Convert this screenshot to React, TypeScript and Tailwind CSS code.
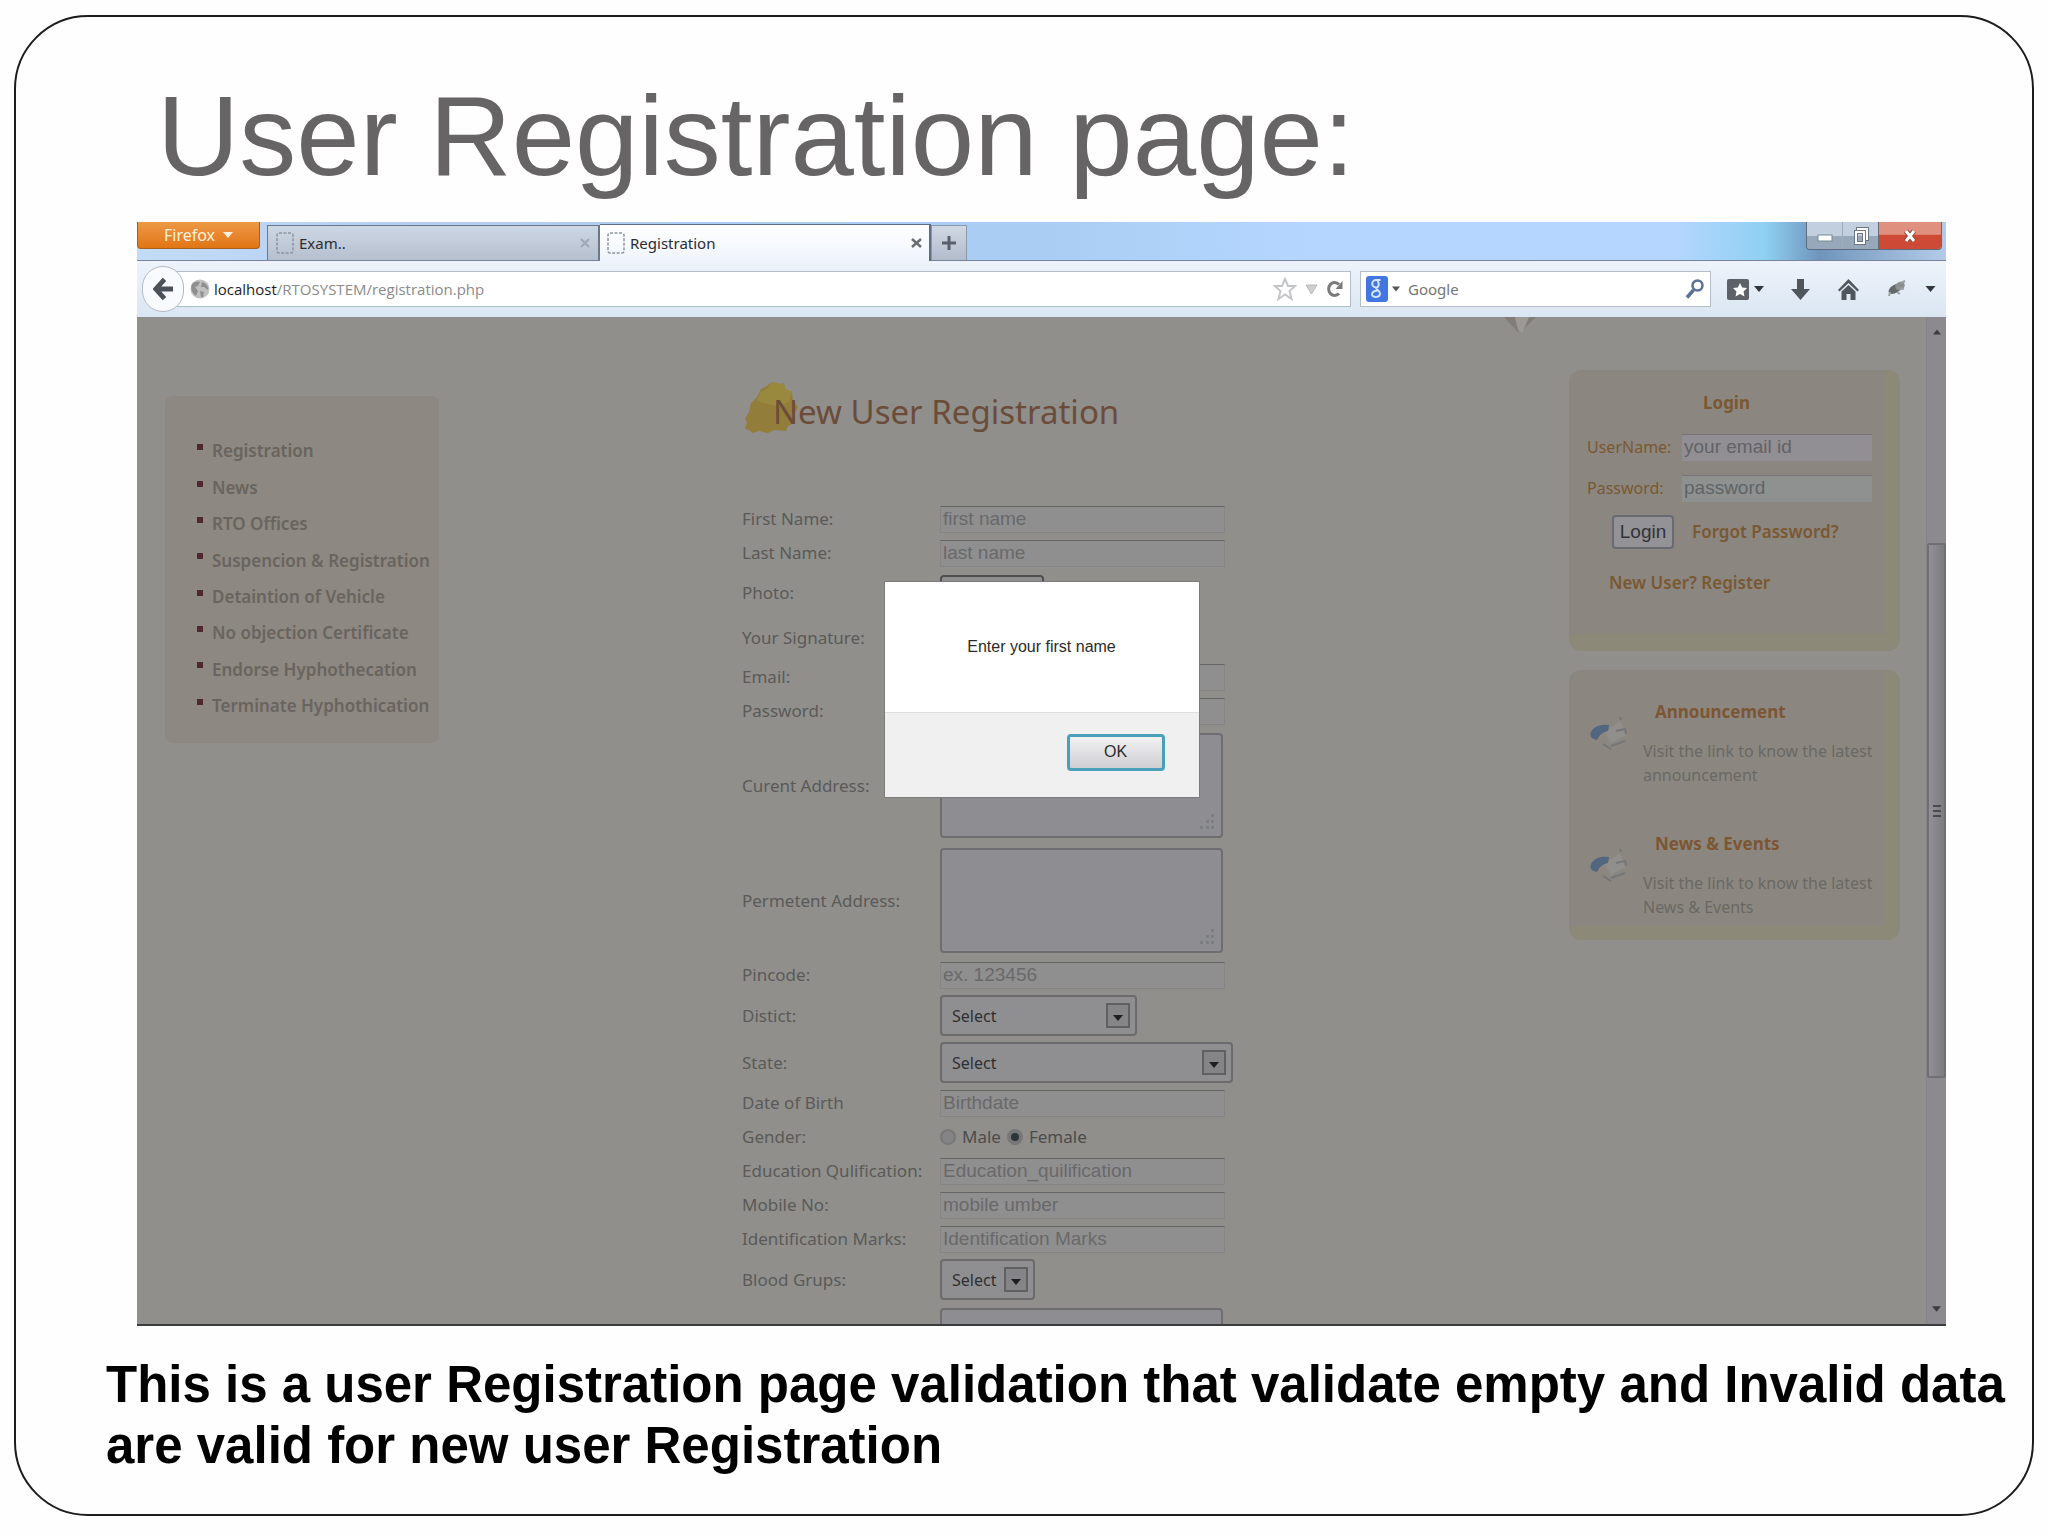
import { useState } from "react";
import type { ReactNode } from "react";

const menuItems = [
  "Registration",
  "News",
  "RTO Offices",
  "Suspencion & Registration",
  "Detaintion of Vehicle",
  "No objection Certificate",
  "Endorse Hyphothecation",
  "Terminate Hyphothication",
];

const BlankPageIcon = () => (
  <svg width="18" height="22" viewBox="0 0 18 22" fill="none" className="shrink-0">
    <rect x="1" y="1" width="16" height="20" rx="2" stroke="#8e95a0" strokeWidth="1.5" strokeDasharray="3 1.5" />
  </svg>
);

const Caret = ({ className }: { className: string }) => (
  <svg width="10" height="6" viewBox="0 0 10 6" className={className}>
    <path d="M0 0h10L5 6z" fill="currentColor" />
  </svg>
);

const TabStrip = () => (
  <div className="flex h-[39px] items-end border-b border-[#76839b] bg-[linear-gradient(90deg,#c3dcf5_0%,#b5cdf5_15%,#a9cdf3_50%,#b5d7ff_65%,#b5d7ff_85%,#8fd0f2_90%,#6f95bb_93%,#b4cbe8_100%)]">
    <button className="mr-[7px] flex h-[27px] w-[123px] items-center justify-center gap-2 self-start rounded-b border border-t-0 border-[#a8611c] bg-linear-to-b from-[#ee9a44] to-[#e07412] font-['Noto_Sans'] text-[16px] text-[#fdf0dc]">
      Firefox
      <Caret className="text-[#fdf0dc]" />
    </button>
    <div className="flex h-[35px] w-[333px] items-center gap-[5px] border-t border-r-2 border-l border-[#6d7789] bg-linear-to-b from-[#cdd7e4] to-[#b6bfcf] px-2 font-['Noto_Sans'] text-[15px] text-[#2b2d33]">
      <BlankPageIcon />
      <span className="flex-1">Exam..</span>
      <button aria-label="Close Exam" className="text-[#9fa8b5]">
        <svg width="10" height="10" viewBox="0 0 10 10" stroke="currentColor" strokeWidth="2">
          <path d="M1 1l8 8M9 1l-8 8" />
        </svg>
      </button>
    </div>
    <div className="-mb-px flex h-[37px] w-[331px] items-center gap-[5px] border-t border-r-2 border-[#5f6c8c] bg-linear-to-b from-white to-[#eff4fc] px-[7px] font-['Noto_Sans'] text-[15px] text-[#2b2d33]">
      <BlankPageIcon />
      <span className="flex-1">Registration</span>
      <button aria-label="Close Registration" className="text-[#6a6e75]">
        <svg width="11" height="10" viewBox="0 0 11 10" stroke="currentColor" strokeWidth="2.5">
          <path d="M1 1l9 8M10 1L1 9" />
        </svg>
      </button>
    </div>
    <button aria-label="New tab" className="flex h-[35px] w-[36px] items-center justify-center border border-b-0 border-[#8d98aa] bg-linear-to-b from-[#d0d8e4] to-[#b3bccb] text-[#5a606a]">
      <svg width="14" height="14" viewBox="0 0 14 14" stroke="currentColor" strokeWidth="3">
        <path d="M7 0v14M0 7h14" />
      </svg>
    </button>
    <div className="mr-1 ml-auto flex h-[28px] self-start overflow-hidden rounded-b border border-t-0 border-[#5d6b7d]">
      <button aria-label="Minimize" className="flex w-[36px] items-end justify-center border-r border-[#9fadbd] bg-linear-to-b from-[#c2cfde] from-50% to-[#98a8bb] to-50% pb-[6px]">
        <svg width="16" height="9" viewBox="0 0 16 9">
          <rect x="1" y="1" width="14" height="6" fill="#fff" stroke="#7b8796" />
        </svg>
      </button>
      <button aria-label="Restore" className="flex w-[36px] items-center justify-center border-r border-[#5d6b7d] bg-linear-to-b from-[#c2cfde] from-50% to-[#98a8bb] to-50%">
        <svg width="16" height="18" viewBox="0 0 16 18" fill="none">
          <path d="M5 5V2h9v10h-3" stroke="#6c7785" strokeWidth="4" />
          <path d="M5 5V2h9v10h-3" stroke="#fff" strokeWidth="2" />
          <rect x="3" y="5" width="8" height="11" stroke="#6c7785" strokeWidth="4" />
          <rect x="3" y="5" width="8" height="11" stroke="#fff" strokeWidth="2" />
        </svg>
      </button>
      <button aria-label="Close" className="flex w-[62px] items-center justify-center bg-linear-to-b from-[#e0907f] from-45% to-[#cc4a36] to-50%">
        <svg width="16" height="14" viewBox="0 0 16 14">
          <path d="M4 2l8 10M12 2L4 12" stroke="#8f4237" strokeWidth="5" />
          <path d="M4 2l8 10M12 2L4 12" stroke="#fff" strokeWidth="3" />
        </svg>
      </button>
    </div>
  </div>
);

const NavBar = () => (
  <div className="flex h-14 items-center bg-linear-to-b from-[#eef3fb] to-[#dae6f2] text-[#51555c]">
    <button aria-label="Back" className="relative z-10 -mr-[8px] ml-[5px] flex h-[46px] w-[42px] shrink-0 items-center justify-center rounded-full border border-[#b3bac4] bg-[#f8fafd]">
      <svg width="21" height="24" viewBox="0 0 22 24" fill="none" stroke="#4b5159" strokeWidth="5">
        <path d="M12 2L3 12l9 10M3 12h18" />
      </svg>
    </button>
    <div className="flex h-[36px] flex-1 items-center border border-[#b4bdc9] border-b-[#a8bfc6] bg-white pr-[6px] pl-[13px] font-['Open_Sans'] text-[15px]">
      <svg width="20" height="20" viewBox="0 0 20 20" className="mr-1 shrink-0">
        <circle cx="10" cy="10" r="9.5" fill="#c0c0c0" />
        <path d="M2 5c3-3 7-3 8-2l-2 4-3 1 3 4-2 5C2 14 0 9 2 5zM12 3c4 1 7 5 6 8l-4-3-3 0zM10 12l4 1-1 5-2 0z" fill="#8f8f8f" />
      </svg>
      <label htmlFor="address" className="font-medium text-[#1e1e1e]">localhost</label>
      <input id="address" defaultValue="/RTOSYSTEM/registration.php" className="min-w-0 flex-1 text-[#8b8b8b] outline-none" />
      <svg width="24" height="24" viewBox="0 0 24 24" className="mr-2" fill="none" stroke="#c3c5c8" strokeWidth="2">
        <path d="M12 2l3 7h7l-5.500 5 2 8L12 17.500 5.500 22l2-8L2 9h7z" />
      </svg>
      <svg width="13" height="11" viewBox="0 0 13 11" className="mr-[9px]">
        <path d="M1 1h11L6.500 10z" fill="#cfcfcf" stroke="#b9b9b9" />
      </svg>
      <svg width="17" height="18" viewBox="0 0 17 18" fill="none">
        <path d="M12 13.500A6 6.500 0 1 1 12 4.500" stroke="#7a7a7a" strokeWidth="3" />
        <path d="M15.500 1v8h-7z" fill="#7a7a7a" />
      </svg>
    </div>
    <form className="mr-4 ml-[9px] flex h-[36px] w-[351px] items-center border border-[#b4bdc9] bg-white px-[5px]">
      <svg width="22" height="26" viewBox="0 0 22 26" className="shrink-0">
        <rect width="22" height="26" rx="3" fill="#4277e0" />
        <path d="M14.500 4H10a3.500 3.500 0 1 0 0 7.500c3 0 3.500-4 1.500-7M10 11.500c-1 2 4 2.500 4 6 0 4.500-8 4.500-8 1s4-4 5.500-3.500" fill="none" stroke="#d5e3fb" strokeWidth="2" />
      </svg>
      <Caret className="mr-2 ml-1 w-2 shrink-0" />
      <input aria-label="Search" placeholder="Google" className="w-full font-['Noto_Sans'] text-[15px] outline-none placeholder:text-[#757575]" />
      <button type="button" aria-label="Go" className="text-[#5c7097]">
        <svg width="20" height="20" viewBox="0 0 20 20" fill="none" stroke="currentColor">
          <circle cx="12.500" cy="6.500" r="5" strokeWidth="2.500" />
          <path d="M8.500 11L2 18.500" strokeWidth="3.500" />
        </svg>
      </button>
    </form>
    <button aria-label="Bookmarks" className="mr-[27px] flex items-center gap-[5px]">
      <svg width="22" height="21" viewBox="0 0 22 21">
        <rect width="22" height="21" rx="2" fill="#5d6168" />
        <path d="M13 4l2.200 4.500 4.800.500-3.500 3.500 1 5-4.500-2.500-4.500 2.500 1-5L6 9l4.800-.500z" fill="#fff" />
      </svg>
      <Caret className="text-[#33363b]" />
    </button>
    <button aria-label="Downloads" className="mr-[28px]">
      <svg width="19" height="21" viewBox="0 0 19 21" fill="currentColor">
        <path d="M6 0h7v10h6l-9.500 11L0 10h6z" />
      </svg>
    </button>
    <button aria-label="Home" className="mr-[28px]">
      <svg width="21" height="21" viewBox="0 0 21 21" fill="currentColor">
        <path d="M10.500 0L21 11l-1.500 1.500L10.500 4l-9 8.500L0 11z" />
        <path d="M10.500 6l7 6.500V21h-5v-6h-4v6h-5v-8.500z" />
      </svg>
    </button>
    <button aria-label="Firebug" className="mr-[18px]">
      <svg width="20" height="18" viewBox="0 0 20 18">
        <ellipse cx="8" cy="9" rx="7" ry="4" fill="#65686a" transform="rotate(-30 8 9)" />
        <ellipse cx="13" cy="6" rx="5" ry="4" fill="#8b8f90" transform="rotate(-30 13 6)" />
        <path d="M14 3l4-2M13 8l4 1M10 12l3 2M3 12l-1 4" stroke="#9da1a1" strokeWidth="2" />
      </svg>
    </button>
    <Caret className="mr-[10px] w-[11px] text-[#33363b]" />
  </div>
);

const Sidebar = () => (
  <nav className="mt-[79px] ml-[28px] h-[347px] w-[274px] shrink-0 rounded-lg bg-[#8d8881] pt-[37px] pl-8">
    <ul className="grid h-[291px] auto-rows-fr">
      {menuItems.map((item) => (
        <li key={item} className="flex items-center gap-[9px]">
          <span className="mb-2 size-[6px] bg-[#4e2830]" />
          <a href="#" className="font-['Noto_Sans'] text-[17px] font-semibold whitespace-nowrap text-[#69645f]">
            {item}
          </a>
        </li>
      ))}
    </ul>
  </nav>
);

interface RowProps {
  label: string;
  id: string;
  className?: string;
  children: ReactNode;
}

const Row = ({ label, id, className = "h-[34px]", children }: RowProps) => (
  <div className={"flex shrink-0 items-center " + className}>
    <label htmlFor={id} className="w-[198px] shrink-0 font-['Noto_Sans'] text-[17px] text-[#5a5a58]">
      {label}
    </label>
    {children}
  </div>
);

const TextBox = ({ id, placeholder = "", type = "text" }: { id: string; placeholder?: string; type?: string }) => (
  <input
    id={id}
    type={type}
    placeholder={placeholder}
    className="h-[27px] w-[285px] border border-[#858588] border-t-[#646466] bg-[#8f8f90] px-[2px] font-['Liberation_Sans'] text-[19px] outline-none placeholder:text-[#69696a]"
  />
);

const AddressBox = ({ id }: { id: string }) => (
  <div className="relative">
    <textarea id={id} className="block h-[105px] w-[283px] resize-none rounded border-2 border-[#6e6e70] bg-[#8e8e92] outline-none" />
    <svg width="16" height="16" viewBox="0 0 16 16" className="absolute right-2 bottom-2" fill="#7b7f81">
      <path d="M12 0h3v3h-3zM7 6h3v3H7zM12 6h3v3h-3zM1 12h3v3H1zM7 12h3v3H7zM12 12h3v3h-3z" />
    </svg>
  </div>
);

const SelectBox = ({ id, className }: { id: string; className: string }) => (
  <div className={"relative h-[41px] " + className}>
    <select id={id} className="h-full w-full appearance-none rounded border-2 border-[#6b6b6d] bg-[#8f8f91] pl-[10px] font-['Noto_Sans'] text-[16px] text-[#303032] outline-none">
      <option>Select</option>
    </select>
    <span className="pointer-events-none absolute top-[8px] right-[7px] flex h-[25px] w-[24px] items-center justify-center border-2 border-[#606062] bg-[#858588] text-[#1f1f21]">
      <Caret className="mt-1" />
    </span>
  </div>
);

const RegistrationForm = () => {
  const [gender, setGender] = useState("female");

  return (
    <main className="flex w-[524px] shrink-0 flex-col">
      <h2 className="relative mt-[71px] mb-[66px] h-12 pl-[31px] font-['Noto_Sans'] text-[33px] leading-[48px] text-[#6b4c38]">
        <svg width="56" height="54" viewBox="0 0 56 54" className="absolute -top-[8px] left-[2px]">
          <path d="M28 2l8 2 4-1 1 6 7 3 1 9 5 6-4 7 1 9-7 3-2 5-12-1-6 3-9-2-6 2-4-3-4-1 2-7-2-3 4-7 2-9 6-6 4-8 6-3z" fill="#937d3a" />
          <path d="M28 2l8 2 4-1 1 6 7 3-3 10-10 4-16-3-6-3 4-8 6-3z" fill="#99893f" />
        </svg>
        <span className="relative">New User Registration</span>
      </h2>
      <form className="flex flex-col">
        <Row label="First Name:" id="first"><TextBox id="first" placeholder="first name" /></Row>
        <Row label="Last Name:" id="last"><TextBox id="last" placeholder="last name" /></Row>
        <Row label="Photo:" id="photo" className="h-[45px]">
          <button id="photo" type="button" className="h-9 w-[104px] rounded border-2 border-[#4e4e50] bg-[#8f8f8f]" />
        </Row>
        <Row label="Your Signature:" id="signature" className="h-[45px]">
          <button id="signature" type="button" className="h-9 w-[104px] rounded border-2 border-[#4e4e50] bg-[#8f8f8f]" />
        </Row>
        <Row label="Email:" id="email"><TextBox id="email" /></Row>
        <Row label="Password:" id="password"><TextBox id="password" type="password" /></Row>
        <Row label="Curent Address:" id="current" className="h-[115px]"><AddressBox id="current" /></Row>
        <Row label="Permetent Address:" id="permanent" className="h-[115px]"><AddressBox id="permanent" /></Row>
        <Row label="Pincode:" id="pincode"><TextBox id="pincode" placeholder="ex. 123456" /></Row>
        <Row label="Distict:" id="district" className="h-[47px]"><SelectBox id="district" className="w-[197px]" /></Row>
        <Row label="State:" id="state" className="h-[47px]"><SelectBox id="state" className="w-[293px]" /></Row>
        <Row label="Date of Birth" id="birth"><TextBox id="birth" placeholder="Birthdate" /></Row>
        <Row label="Gender:" id="male">
          <div className="flex items-center gap-[6px] font-['Noto_Sans'] text-[17px] text-[#4c4c4b]">
            <input
              id="male"
              type="radio"
              name="gender"
              checked={gender === "male"}
              onChange={() => setGender("male")}
              className="size-4 appearance-none rounded-full border-2 border-[#777778] bg-[#848486] checked:border-4 checked:bg-[#2c3538]"
            />
            <label htmlFor="male">Male</label>
            <input
              id="female"
              type="radio"
              name="gender"
              checked={gender === "female"}
              onChange={() => setGender("female")}
              className="size-4 appearance-none rounded-full border-2 border-[#777778] bg-[#848486] checked:border-4 checked:bg-[#2c3538]"
            />
            <label htmlFor="female">Female</label>
          </div>
        </Row>
        <Row label="Education Qulification:" id="education"><TextBox id="education" placeholder="Education_quilification" /></Row>
        <Row label="Mobile No:" id="mobile"><TextBox id="mobile" placeholder="mobile umber" /></Row>
        <Row label="Identification Marks:" id="marks"><TextBox id="marks" placeholder="Identification Marks" /></Row>
        <Row label="Blood Grups:" id="blood" className="h-[47px]"><SelectBox id="blood" className="w-[95px]" /></Row>
        <Row label="" id="other" className="h-[115px]"><AddressBox id="other" /></Row>
      </form>
    </main>
  );
};

const LoginBox = () => (
  <form className="flex h-[281px] flex-col rounded-xl border-r-[14px] border-b-[16px] border-[#8c8979] bg-[#8b8780] pl-[18px] font-['Noto_Sans'] text-[16px] text-[#7a5832]">
    <h3 className="mt-[21px] ml-[116px] text-[17px] leading-6 font-bold">Login</h3>
    <div className="mt-[15px] flex h-[34px] items-center">
      <label htmlFor="login-user" className="w-[95px] shrink-0">UserName:</label>
      <input id="login-user" placeholder="your email id" className="h-[27px] w-[190px] border-t border-[#747275] bg-[#918f94] px-[2px] font-['Liberation_Sans'] text-[19px] outline-none placeholder:text-[#636266]" />
    </div>
    <div className="mt-[7px] flex h-[34px] items-center">
      <label htmlFor="login-pass" className="w-[95px] shrink-0">Password:</label>
      <input id="login-pass" type="password" placeholder="password" className="h-[27px] w-[190px] border-t border-[#747275] bg-[#8e9190] px-[2px] font-['Liberation_Sans'] text-[19px] outline-none placeholder:text-[#5e6466]" />
    </div>
    <div className="mt-[10px] ml-[25px] flex items-center gap-[18px]">
      <button type="button" className="h-[34px] w-[62px] rounded-sm border-2 border-[#696b72] bg-[#929297] font-['Liberation_Sans'] text-[19px] text-[#333338]">
        Login
      </button>
      <a href="#" className="text-[17px] font-semibold">Forgot Password?</a>
    </div>
    <a href="#" className="mt-[21px] ml-[22px] text-[17px] font-semibold">New User? Register</a>
  </form>
);

const MegaphoneIcon = () => (
  <svg width="42" height="42" viewBox="0 0 42 42" className="mt-[13px] -ml-[2px] shrink-0" fill="none">
    <path d="M16 19L31 8l6 14-15 8z" fill="#918f8c" />
    <path d="M2 19c3-6 10-8 18-7l-1 6c-5 1-8 3-11 9-5-1-8-4-6-8z" fill="#526680" />
    <path d="M31 4l1 3M27 18l9-2M36 15l1 6M14 31l8 5M22 33l14-5" stroke="#757678" strokeWidth="2" />
  </svg>
);

const NewsItem = ({ title, text }: { title: string; text: string }) => (
  <article className="flex h-[132px] gap-[12px]">
    <MegaphoneIcon />
    <div className="font-['Noto_Sans']">
      <h3 className="ml-3 text-[17px] leading-6 font-bold text-[#7c5632]">{title}</h3>
      <p className="mt-[15px] w-[240px] text-[16px] leading-6 text-[#6a6864]">{text}</p>
    </div>
  </article>
);

const ScrollBar = () => (
  <div className="flex w-[20px] shrink-0 flex-col items-center border-l border-[#858388] bg-[#8c8a8f] text-[#3d3d40]">
    <Caret className="mt-3 w-[8px] rotate-180" />
    <div className="mt-[208px] flex h-[535px] w-[19px] flex-col items-center justify-center gap-[3px] rounded-xs border-2 border-[#706f74] bg-linear-to-r from-[#929196] to-[#7d7b82]">
      <span className="h-[2px] w-2 bg-[#4b4b4f]" />
      <span className="h-[2px] w-2 bg-[#4b4b4f]" />
      <span className="h-[2px] w-2 bg-[#4b4b4f]" />
    </div>
    <Caret className="mt-auto mb-3 w-[9px]" />
  </div>
);

const AlertDialog = () => (
  <div role="dialog" aria-label="Alert" className="absolute top-[265px] left-1/2 w-[314px] -translate-x-1/2 bg-white font-['Liberation_Sans'] text-[16px] text-[#2b2b2b] outline outline-[#7b7b7b]">
    <p className="flex h-[130px] items-center justify-center">Enter your first name</p>
    <div className="flex h-[85px] items-center justify-end border-t border-[#dedede] bg-[#f1f0f1] pr-[34px]">
      <button className="mb-[6px] h-[37px] w-[98px] rounded border-[3px] border-[#4a9fbb] bg-linear-to-b from-[#f2f2f2] to-[#cfcfd4]">OK</button>
    </div>
  </div>
);

export default function App() {
  return (
    <div className="min-h-screen bg-[#fefefe] px-[14px] pt-[15px] pb-[20px]">
      <div className="min-h-[calc(100vh-35px)] rounded-[74px] border-2 border-[#1c1c1c] bg-[#fefefe]">
        <h1 className="mt-[59px] mb-[26px] ml-[141px] font-['Liberation_Sans'] text-[114px] leading-[120px] text-[#666465]">
          User Registration page:
        </h1>

        <section className="mr-[86px] ml-[121px] overflow-hidden border-b-2 border-[#3a3d3d]">
          <TabStrip />
          <NavBar />
          <div className="relative flex h-[1007px] overflow-hidden bg-[#908f8c]">
            <div className="flex flex-1 justify-between">
              <Sidebar />
              <RegistrationForm />
              <aside className="mr-[26px] w-[331px] shrink-0 pt-[53px]">
                <LoginBox />
                <div className="mt-[19px] h-[270px] rounded-xl border-r-[14px] border-b-[14px] border-[#8c8979] bg-[#8b8780] pt-[30px] pl-[22px]">
                  <NewsItem title="Announcement" text="Visit the link to know the latest announcement" />
                  <NewsItem title="News & Events" text="Visit the link to know the latest News & Events" />
                </div>
              </aside>
            </div>
            <ScrollBar />
            {/* lower tip of the banner drawing that is scrolled out of view */}
            <svg width="36" height="18" viewBox="0 0 36 18" className="absolute top-0 right-[408px]">
              <path d="M2 0h32l-8 8-10 7-8-8z" fill="#837d79" />
              <path d="M13 0h14l-7 16-4-3z" fill="#9d9995" />
            </svg>
            <AlertDialog />
          </div>
        </section>

        <p className="mt-[28px] ml-[90px] font-['Liberation_Sans'] text-[51px] leading-[61px] font-bold text-black">
          This is a user Registration page validation that validate empty and Invalid data are valid for new user Registration
        </p>
      </div>
    </div>
  );
}
